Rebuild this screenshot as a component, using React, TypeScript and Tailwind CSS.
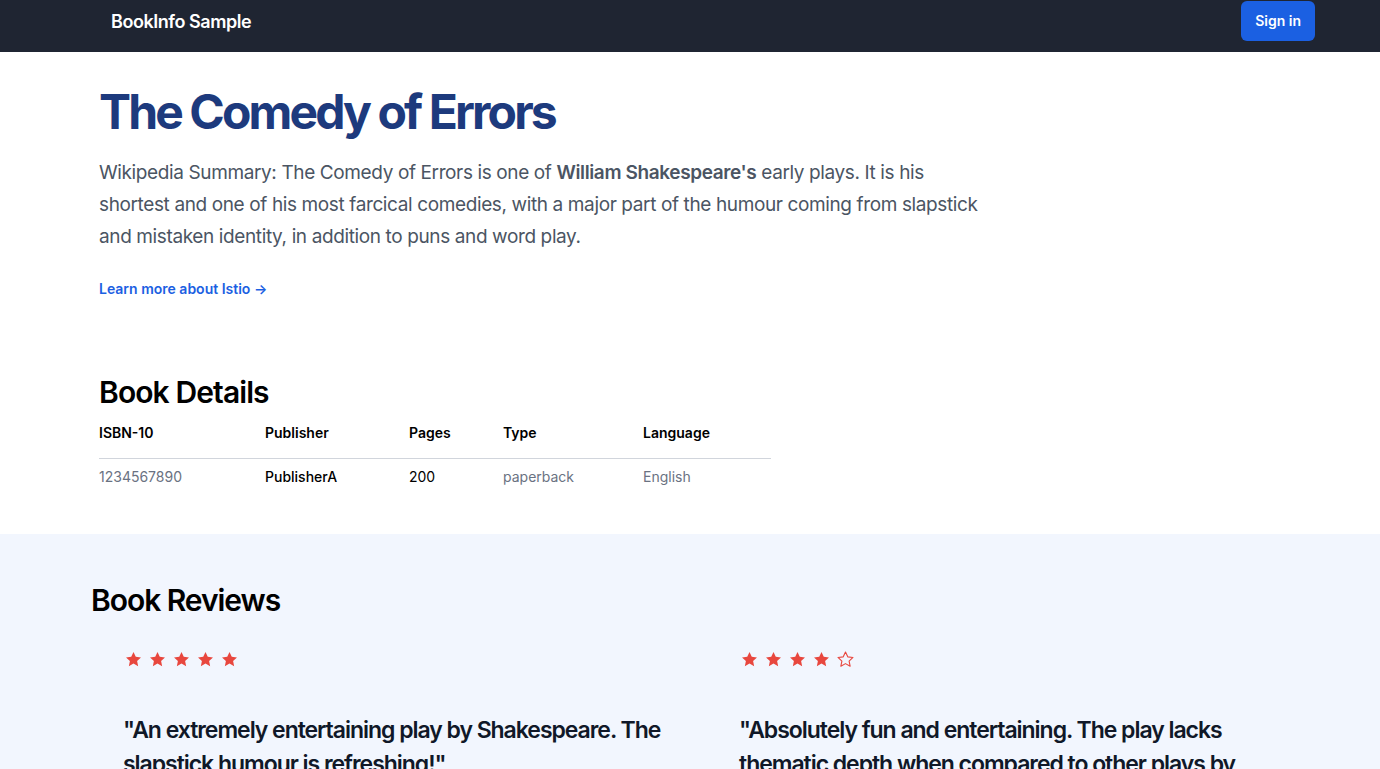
const reviews = [
  {
    rating: 5,
    text: '"An extremely entertaining play by Shakespeare. The slapstick humour is refreshing!"',
    reviewer: 'Reviewer1',
  },
  {
    rating: 4,
    text: '"Absolutely fun and entertaining. The play lacks thematic depth when compared to other plays by Shakespeare."',
    reviewer: 'Reviewer2',
  },
];

const Star = ({ filled }: { filled: boolean }) => (
  <svg
    viewBox="0 0 24 24"
    className="h-[19px] w-[19px]"
    fill={filled ? '#e8473e' : 'none'}
    stroke="#e8473e"
    strokeWidth={filled ? 0 : 1.4}
    strokeLinejoin="round"
    aria-hidden="true">
    <path d="M12 2.6l2.85 6.05 6.6.78-4.9 4.52 1.32 6.52L12 17.2l-5.87 3.27 1.32-6.52-4.9-4.52 6.6-.78z" />
  </svg>
);

const App = () => {
  return (
    <div className="min-h-screen bg-white font-['Inter','Liberation_Sans',sans-serif]">
      {/* Nav */}
      <nav className="h-[52px] bg-[#1f2532]">
        <div className="flex h-full items-start justify-between pl-[111px] pr-[65px]">
          <a href="#" className="mt-[8px] text-[18px] font-semibold tracking-[-0.025em] text-white">
            BookInfo Sample
          </a>
          <button
            type="button"
            className="mt-px h-10 rounded-md bg-[#1b60e2] px-[14px] text-sm font-semibold text-white">
            Sign in
          </button>
        </div>
      </nav>

      {/* Summary */}
      <section className="px-[99px] pt-[30px]">
        <h1 className="text-[48px] leading-[60px] font-bold tracking-[-0.06em] text-[#1d3a7d]">
          The Comedy of Errors
        </h1>
        <p className="mt-[15px] max-w-[896px] text-[19px] leading-[32px] tracking-[-0.02em] text-[#4b5563]">
          Wikipedia Summary: The Comedy of Errors is one of{' '}
          <b className="font-semibold">William Shakespeare's</b> early plays. It is his shortest and
          one of his most farcical comedies, with a major part of the humour coming from slapstick
          and mistaken identity, in addition to puns and word play.
        </p>
        <a href="#" className="mt-[26px] block text-sm font-semibold text-[#1b60e2]">
          Learn more about Istio <span aria-hidden="true">&rarr;</span>
        </a>
      </section>

      {/* Details */}
      <section className="px-[99px] pt-[75px] pb-[47px]">
        <h2 className="text-[30px] leading-[36px] font-semibold tracking-[-0.03em] text-black">
          Book Details
        </h2>
        <table className="mt-[13px] w-[672px] table-fixed text-left text-sm">
          <thead>
            <tr className="border-b border-gray-300">
              <th className="w-[166px] pb-[15px] font-semibold text-black">ISBN-10</th>
              <th className="w-[144px] pb-[15px] font-semibold text-black">Publisher</th>
              <th className="w-[94px] pb-[15px] font-semibold text-black">Pages</th>
              <th className="w-[140px] pb-[15px] font-semibold text-black">Type</th>
              <th className="pb-[15px] font-semibold text-black">Language</th>
            </tr>
          </thead>
          <tbody>
            <tr>
              <td className="pt-[8px] text-gray-500">1234567890</td>
              <td className="pt-[8px] font-medium text-black">PublisherA</td>
              <td className="pt-[8px] text-black">200</td>
              <td className="pt-[8px] text-gray-500">paperback</td>
              <td className="pt-[8px] text-gray-500">English</td>
            </tr>
          </tbody>
        </table>
      </section>

      {/* Reviews */}
      <section className="bg-[#f2f6fe] pt-[48px] pb-16">
        <h2 className="pl-[91px] text-[30px] leading-[36px] font-semibold tracking-[-0.035em] text-black">
          Book Reviews
        </h2>
        <div className="grid grid-cols-[616px_616px] pl-[107px]">
          {reviews.map((review) => (
            <div key={review.reviewer} className="px-4 pt-[32px]">
              <div className="flex gap-[5px] pl-[1px]">
                {[1, 2, 3, 4, 5].map((i) => (
                  <Star key={i} filled={i <= review.rating} />
                ))}
              </div>
              <blockquote className="mt-[44px] max-w-[560px] text-[23px] leading-[34px] font-semibold tracking-[-0.045em] text-gray-900">
                {review.text}
              </blockquote>
              <p className="mt-4 text-base text-gray-600">{review.reviewer}</p>
            </div>
          ))}
        </div>
      </section>
    </div>
  );
};

export default App;
